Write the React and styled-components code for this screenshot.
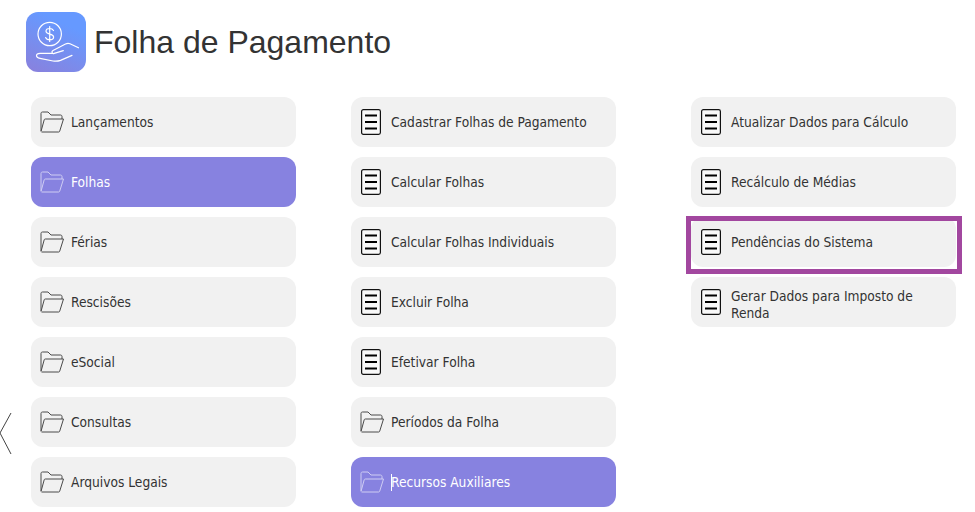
import React from "react";
import styled, { createGlobalStyle } from "styled-components";

const Global = createGlobalStyle`
  html, body { margin: 0; padding: 0; background: #fff; }
  body { font-family: "DejaVu Sans", "Noto Sans", sans-serif; font-stretch: condensed; overflow: hidden; }
`;

const Page = styled.div`
  position: relative;
  width: 975px;
  height: 512px;
  overflow: hidden;
`;

const Header = styled.header`
  display: flex;
  align-items: center;
  gap: 8px;
  padding: 12px 0 0 26px;
  height: 60px;
`;

const Logo = styled.div`
  width: 60px;
  height: 60px;
  border-radius: 12px;
  overflow: hidden;
  background: linear-gradient(25deg, #8a80dc 0%, #7a8cec 35%, #6699ff 75%);
`;

const Title = styled.h1`
  margin: 0;
  font-family: "Liberation Sans", Arial, sans-serif;
  font-stretch: normal;
  font-weight: 400;
  font-size: 32px;
  line-height: 40px;
  color: #333;
`;

const Columns = styled.main`
  display: flex;
  padding: 25px 0 0 31px;
`;

const Column = styled.div`
  flex: none;
  width: 265px;
  margin-right: ${(p) => p.$after}px;
  display: flex;
  flex-direction: column;
  gap: 10px;
`;

const Item = styled.div`
  position: relative;
  box-sizing: border-box;
  height: 50px;
  display: flex;
  align-items: center;
  gap: ${(p) => (p.$doc ? "10px" : "7px")};
  padding-left: ${(p) => (p.$doc ? "10px" : "9px")};
  border-radius: 12px;
  background: ${(p) => (p.$active ? "#8782e0" : "#f1f1f1")};
  color: ${(p) => (p.$active ? "#fff" : "#333")};
  font-size: 13.65px;
  line-height: 17px;
`;

const Label = styled.span`
  position: relative;
  display: block;
  padding-right: 16px;
  padding-top: ${(p) => (p.$low ? "5px" : "0")};
`;

const Caret = styled.i`
  position: absolute;
  left: 0;
  top: 0;
  width: 1px;
  height: 17px;
  background: #fff;
`;

const Highlight = styled.div`
  position: absolute;
  left: -5px;
  top: -1px;
  width: 276px;
  height: 58px;
  box-sizing: border-box;
  border: 5px solid #a2479f;
  pointer-events: none;
`;

const BackArrow = styled.svg`
  position: absolute;
  left: 0;
  top: 412px;
`;

const HandIcon = () => (
  <svg width="60" height="60" viewBox="0 0 60 60" fill="none" stroke="#fff" strokeWidth="1.200" strokeLinecap="round" strokeLinejoin="round">
    <circle cx="23.700" cy="22" r="11.700" />
    <path d="M27.500 18.500c-.7-1.300-2-2-3.800-2-2.200 0-3.700 1.100-3.700 2.800 0 3.700 7.600 1.900 7.600 5.600 0 1.700-1.500 2.800-3.900 2.800-2 0-3.500-.8-4.100-2.200M23.700 14.500v15" />
    <path d="M52.500 35.800 44 31.800c-1.500-.6-3-.5-4.500.2L27 38.500c-2 1.200-.8 3.600 1.300 2.900l9-2.800" />
    <path d="M26.500 41.300H14c-2.400 0-3.500 1-3.500 2.300S11.800 46 14 46.300l13 2.700c2.600.4 5.200.2 7.500-.6l11.500-5" />
  </svg>
);

const FolderIcon = ({ $light }) => (
  <svg width="24" height="22" viewBox="0 0 24 22" fill="none" stroke={$light ? "#cfcdf3" : "#4a4a4a"} strokeWidth="1" strokeLinejoin="round" style={{ flex: "none" }}>
    <path d="M1 20V2.500C1 1.600 1.600 1 2.500 1H8l3 3h9.500c.8 0 1.500.600 1.500 1.500V8" />
    <path d="M1.500 21h17.200c.5 0 .8-.3 1-.8L23.500 8H5.200c-.5 0-.8.3-1 .8L1 20.500" />
  </svg>
);

const DocIcon = () => (
  <svg width="20" height="26" viewBox="0 0 20 26" fill="#f8f8f8" style={{ flex: "none" }}>
    <rect x=".6" y=".6" width="18.800" height="24.800" rx="1.800" stroke="#111" strokeWidth="1.200" />
    <path d="M4 6.500h12M4 13h12M4 19.500h12" stroke="#000" strokeWidth="2" />
  </svg>
);

const col1 = [
  { t: "Lançamentos" },
  { t: "Folhas", active: true },
  { t: "Férias" },
  { t: "Rescisões" },
  { t: "eSocial" },
  { t: "Consultas" },
  { t: "Arquivos Legais" },
];
const col2 = [
  { t: "Cadastrar Folhas de Pagamento", doc: true },
  { t: "Calcular Folhas", doc: true },
  { t: "Calcular Folhas Individuais", doc: true },
  { t: "Excluir Folha", doc: true },
  { t: "Efetivar Folha", doc: true },
  { t: "Períodos da Folha" },
  { t: "Recursos Auxiliares", active: true, caret: true },
];
const col3 = [
  { t: "Atualizar Dados para Cálculo", doc: true },
  { t: "Recálculo de Médias", doc: true },
  { t: "Pendências do Sistema", doc: true, mark: true },
  { t: "Gerar Dados para Imposto de Renda", doc: true, low: true },
];

const Entry = ({ t, doc, active, caret, mark, low }) => (
  <Item $doc={doc} $active={active}>
    {doc ? <DocIcon /> : <FolderIcon $light={active} />}
    <Label $low={low}>
      {caret && <Caret />}
      {t}
    </Label>
    {mark && <Highlight />}
  </Item>
);

const columns = [
  { items: col1, after: 55 },
  { items: col2, after: 75 },
  { items: col3, after: 0 },
];

export default function App() {
  return (
    <Page>
      <Global />
      <Header>
        <Logo><HandIcon /></Logo>
        <Title>Folha de Pagamento</Title>
      </Header>
      <Columns>
        {columns.map((col, i) => (
          <Column key={i} $after={col.after}>
            {col.items.map((e) => <Entry key={e.t} {...e} />)}
          </Column>
        ))}
      </Columns>
      <BackArrow width="12" height="44" viewBox="0 0 12 44" fill="none" stroke="#444" strokeWidth="1">
        <path d="M11 1 0 21l11 21" />
      </BackArrow>
    </Page>
  );
}
